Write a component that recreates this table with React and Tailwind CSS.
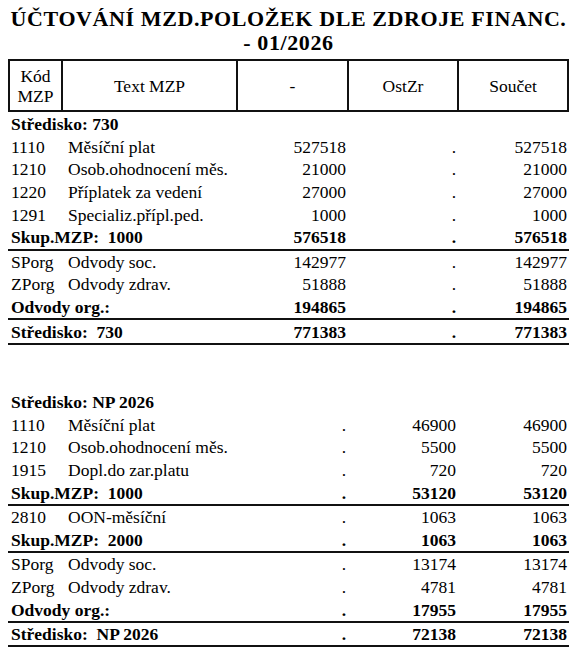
import React from 'react';

const cols = 'grid grid-cols-[54px_175px_111px_110px_111px]';

const sections = [
  {
    title: 'Středisko: 730',
    rows: [
      { code: '1110', text: 'Měsíční plat', vals: ['527518', '.', '527518'] },
      { code: '1210', text: 'Osob.ohodnocení měs.', vals: ['21000', '.', '21000'] },
      { code: '1220', text: 'Příplatek za vedení', vals: ['27000', '.', '27000'] },
      { code: '1291', text: 'Specializ.přípl.ped.', vals: ['1000', '.', '1000'] },
      { label: 'Skup.MZP:  1000', vals: ['576518', '.', '576518'], line: true },
      { code: 'SPorg', text: 'Odvody soc.', vals: ['142977', '.', '142977'] },
      { code: 'ZPorg', text: 'Odvody zdrav.', vals: ['51888', '.', '51888'] },
      { label: 'Odvody org.:', vals: ['194865', '.', '194865'], line: true },
      { label: 'Středisko:  730', vals: ['771383', '.', '771383'], line: true },
    ],
  },
  {
    title: 'Středisko: NP 2026',
    rows: [
      { code: '1110', text: 'Měsíční plat', vals: ['.', '46900', '46900'] },
      { code: '1210', text: 'Osob.ohodnocení měs.', vals: ['.', '5500', '5500'] },
      { code: '1915', text: 'Dopl.do zar.platu', vals: ['.', '720', '720'] },
      { label: 'Skup.MZP:  1000', vals: ['.', '53120', '53120'], line: true },
      { code: '2810', text: 'OON-měsíční', vals: ['.', '1063', '1063'] },
      { label: 'Skup.MZP:  2000', vals: ['.', '1063', '1063'], line: true },
      { code: 'SPorg', text: 'Odvody soc.', vals: ['.', '13174', '13174'] },
      { code: 'ZPorg', text: 'Odvody zdrav.', vals: ['.', '4781', '4781'] },
      { label: 'Odvody org.:', vals: ['.', '17955', '17955'], line: true },
      { label: 'Středisko:  NP 2026', vals: ['.', '72138', '72138'], line: true },
    ],
  },
];

const Row = ({ row }) => {
  const bold = !!row.label;
  return (
    <>
      <div className={`${cols} h-[22.6px] items-center ${bold ? 'font-bold' : ''}`}>
        {bold ? (
          <div className="col-span-2 pl-[3px] whitespace-pre">{row.label}</div>
        ) : (
          <>
            <div className="pl-[3px]">{row.code}</div>
            <div className="pl-[6px] whitespace-nowrap">{row.text}</div>
          </>
        )}
        {row.vals.map((v, i) => (
          <div key={i} className="text-right pr-[2px]">{v}</div>
        ))}
      </div>
      {row.line && <div className="h-[2px] bg-[#111]" />}
    </>
  );
};

const Section = ({ section }) => (
  <div>
    <div className="h-[22.6px] flex items-center pl-[3px] font-bold">{section.title}</div>
    {section.rows.map((r, i) => (
      <Row key={i} row={r} />
    ))}
  </div>
);

export default function App() {
  return (
    <div className="bg-white w-[582px] h-[661px] text-black [font-family:'Liberation_Serif',serif] text-[17.5px] leading-[22px]">
      <div className="w-[561px] ml-2 pt-[7px]">
        <h1 className="text-center font-bold text-[22px] leading-[24px] tracking-[0.6px] whitespace-nowrap">
          ÚČTOVÁNÍ MZD.POLOŽEK DLE ZDROJE FINANC.
          <br />- 01/2026
        </h1>
        <div className="mt-[4px] border-2 border-[#111] grid grid-cols-[51px_175px_111px_110px_110px] h-[53px]">
          <div className="flex items-center justify-center text-center leading-[20px]">
            Kód
            <br />
            MZP
          </div>
          <div className="border-l-2 border-[#111] flex items-center justify-center">Text MZP</div>
          <div className="border-l-2 border-[#111] flex items-center justify-center">-</div>
          <div className="border-l-2 border-[#111] flex items-center justify-center">OstZr</div>
          <div className="border-l-2 border-[#111] flex items-center justify-center">Součet</div>
        </div>
        <div className="mt-[1px]">
          <Section section={sections[0]} />
        </div>
        <div className="mt-[46px]">
          <Section section={sections[1]} />
        </div>
      </div>
    </div>
  );
}
